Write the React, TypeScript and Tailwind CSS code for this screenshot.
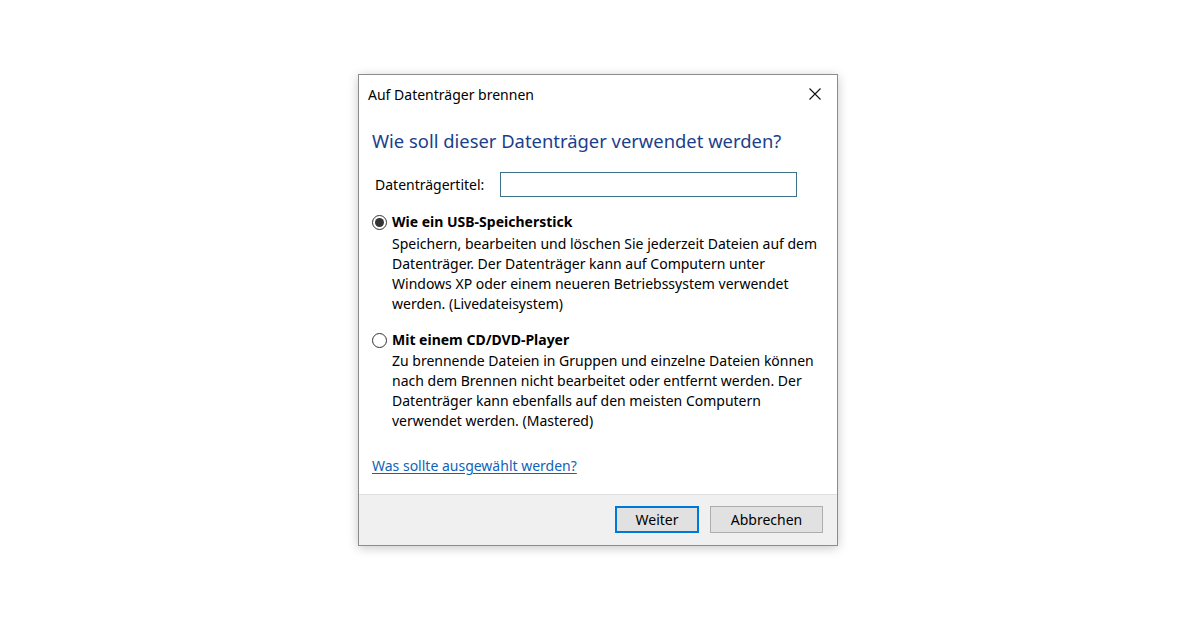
import React from "react";

function Radio({ checked }: { checked?: boolean }) {
  return (
    <span className="flex h-[15px] w-[15px] shrink-0 items-center justify-center rounded-full border border-[#333333] bg-white">
      {checked ? <span className="block h-[9px] w-[9px] rounded-full bg-[#333333]" /> : null}
    </span>
  );
}

export default function App() {
  const font = { fontFamily: '"Noto Sans", "Open Sans", sans-serif' };
  return (
    <div className="h-[630px] w-[1200px] overflow-hidden bg-white" style={font}>
      <div className="ml-[358px] pt-[74px]">
        <div className="flex h-[472px] w-[480px] flex-col border border-[#8c8c8c] bg-white shadow-[0_2px_10px_rgba(0,0,0,0.22)]">
          {/* title bar */}
          <div className="relative flex h-[38px] shrink-0 items-center pl-[9px] text-[14px] text-black">
            <span>Auf Datenträger brennen</span>
            <svg className="absolute right-[16px] top-[13px]" width="12" height="12" viewBox="0 0 12 12">
              <path d="M0.5 0.5 L11.5 11.5 M11.5 0.5 L0.5 11.5" stroke="#111" strokeWidth="1.1" />
            </svg>
          </div>

          <div className="flex flex-1 flex-col px-[13px]">
            <div className="mt-[14px] text-[18.4px] leading-[28px] text-[#1b3f8b]">
              Wie soll dieser Datenträger verwendet werden?
            </div>

            <div className="mt-[17px] flex items-center">
              <span className="ml-[3px] w-[125px] text-[14px] text-black">Datenträgertitel:</span>
              <div className="h-[25px] w-[297px] border border-[#3d7089] bg-white" />
            </div>

            <div className="mt-[15px] flex items-center gap-[5px]">
              <Radio checked />
              <span className="text-[14px] font-bold leading-[20px] text-black">Wie ein USB-Speicherstick</span>
            </div>
            <div className="mt-[2px] pl-[20px] text-[14px] leading-[20px] text-black">
              Speichern, bearbeiten und löschen Sie jederzeit Dateien auf dem
              <br />
              Datenträger. Der Datenträger kann auf Computern unter
              <br />
              Windows XP oder einem neueren Betriebssystem verwendet
              <br />
              werden. (Livedateisystem)
            </div>

            <div className="mt-[16px] flex items-center gap-[5px]">
              <Radio />
              <span className="text-[14px] font-bold leading-[20px] text-black">Mit einem CD/DVD-Player</span>
            </div>
            <div className="mt-[1px] pl-[20px] text-[14px] leading-[20px] text-black">
              Zu brennende Dateien in Gruppen und einzelne Dateien können
              <br />
              nach dem Brennen nicht bearbeitet oder entfernt werden. Der
              <br />
              Datenträger kann ebenfalls auf den meisten Computern
              <br />
              verwendet werden. (Mastered)
            </div>

            <div className="mt-[25px] text-[14px] leading-[20px]">
              <span className="text-[#0f63b8] underline underline-offset-2">Was sollte ausgewählt werden?</span>
            </div>
          </div>

          {/* footer */}
          <div className="flex h-[51px] shrink-0 items-start justify-end gap-[11px] border-t border-[#dfdfdf] bg-[#f0f0f0] pr-[14px] pt-[11px]">
            <button className="flex h-[27px] w-[84px] items-center justify-center border-2 border-[#0078d7] bg-[#e1e1e1] text-[14px] text-black">
              Weiter
            </button>
            <button className="flex h-[27px] w-[113px] items-center justify-center border border-[#adadad] bg-[#e1e1e1] text-[14px] text-black">
              Abbrechen
            </button>
          </div>
        </div>
      </div>
    </div>
  );
}
